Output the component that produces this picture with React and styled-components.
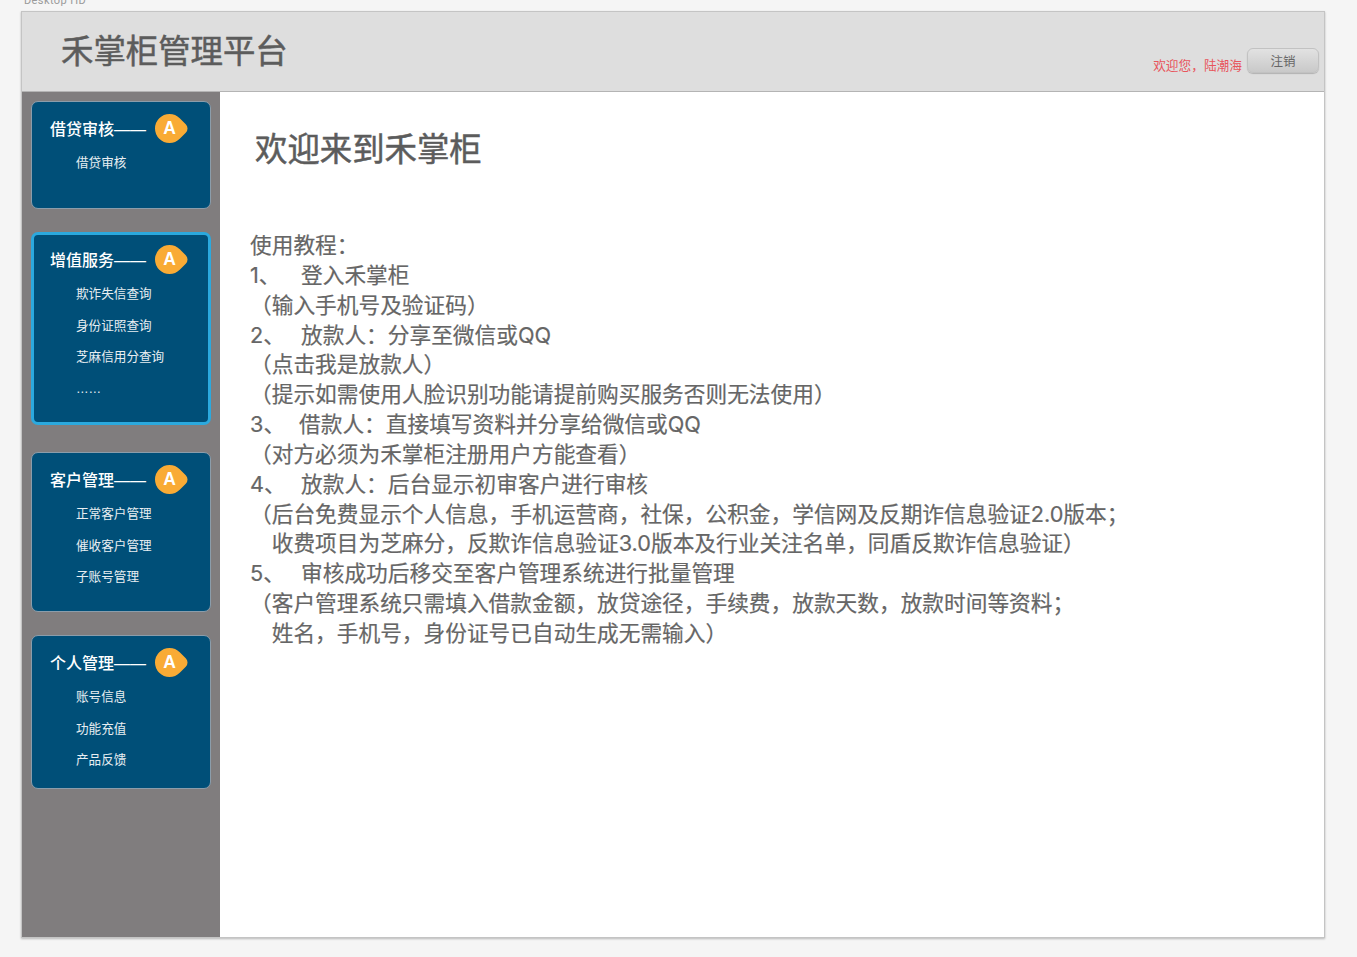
import React from "react";
import styled, { createGlobalStyle } from "styled-components";

const GlobalStyle = createGlobalStyle`
  html, body {
    margin: 0;
    padding: 0;
    background: #f5f5f5;
  }
  body {
    font-family: "Liberation Sans", "Noto Sans CJK SC", sans-serif;
    overflow: hidden;
  }
`;

const menus = [
  { title: "借贷审核", height: 108, after: 23, items: ["借贷审核"] },
  {
    title: "增值服务",
    height: 193,
    after: 27,
    active: true,
    items: ["欺诈失信查询", "身份证照查询", "芝麻信用分查询", "……"],
  },
  {
    title: "客户管理",
    height: 160,
    after: 23,
    items: ["正常客户管理", "催收客户管理", "子账号管理"],
  },
  {
    title: "个人管理",
    height: 154,
    after: 0,
    items: ["账号信息", "功能充值", "产品反馈"],
  },
];

const tutorial = [
  { text: "使用教程：" },
  { num: "1、", gap: 51, text: "登入禾掌柜" },
  { text: "（输入手机号及验证码）" },
  { num: "2、", gap: 51, text: "放款人：分享至微信或QQ" },
  { text: "（点击我是放款人）" },
  { text: "（提示如需使用人脸识别功能请提前购买服务否则无法使用）" },
  { num: "3、", gap: 49, text: "借款人：直接填写资料并分享给微信或QQ" },
  { text: "（对方必须为禾掌柜注册用户方能查看）" },
  { num: "4、", gap: 51, text: "放款人：后台显示初审客户进行审核" },
  { text: "（后台免费显示个人信息，手机运营商，社保，公积金，学信网及反期诈信息验证2.0版本；" },
  { text: "　收费项目为芝麻分，反欺诈信息验证3.0版本及行业关注名单，同盾反欺诈信息验证）" },
  { num: "5、", gap: 51, text: "审核成功后移交至客户管理系统进行批量管理" },
  { text: "（客户管理系统只需填入借款金额，放贷途径，手续费，放款天数，放款时间等资料；" },
  { text: "　姓名，手机号，身份证号已自动生成无需输入）" },
];

const App = () => {
  return (
    <Page lang="zh-CN">
      <GlobalStyle />
      <FrameLabel>Desktop HD</FrameLabel>
      <Frame>
        <Header>
          <Logo>禾掌柜管理平台</Logo>
          <UserArea>
            <Welcome>欢迎您，陆潮海</Welcome>
            <LogoutBtn>注销</LogoutBtn>
          </UserArea>
        </Header>
        <Body>
          <Sidebar>
            {menus.map((menu) => (
              <MenuCard
                key={menu.title}
                $height={menu.height}
                $after={menu.after}
                $active={menu.active}
              >
                <MenuHead>
                  <MenuTitle>{menu.title}——</MenuTitle>
                  <Badge>
                    <BadgeLetter>A</BadgeLetter>
                  </Badge>
                </MenuHead>
                <MenuList>
                  {menu.items.map((item) => (
                    <MenuItem key={item}>{item}</MenuItem>
                  ))}
                </MenuList>
              </MenuCard>
            ))}
          </Sidebar>
          <Content>
            <Heading>欢迎来到禾掌柜</Heading>
            <Tutorial>
              {tutorial.map((line) => (
                <TutorialLine key={line.text}>
                  {line.num && <LineNum $gap={line.gap}>{line.num}</LineNum>}
                  {line.text}
                </TutorialLine>
              ))}
            </Tutorial>
          </Content>
        </Body>
      </Frame>
    </Page>
  );
};

const Page = styled.div`
  width: 1357px;
  height: 957px;
  overflow: hidden;
`;

const FrameLabel = styled.div`
  height: 11px;
  padding-left: 24px;
  font-family: Roboto, sans-serif;
  font-size: 11px;
  line-height: 1px;
  letter-spacing: 0.4px;
  color: #9a9a9a;
  overflow: hidden;
`;

const Frame = styled.div`
  width: 1302px;
  height: 925px;
  margin-left: 21px;
  border: 1px solid #c4c4c4;
  box-shadow: 0 1px 2px rgba(0, 0, 0, 0.25);
  display: flex;
  flex-direction: column;
  background: #fff;
`;

const Header = styled.header`
  height: 79px;
  flex-shrink: 0;
  display: flex;
  justify-content: space-between;
  padding: 0 5px 0 39px;
  background: #dedede;
  border-bottom: 1px solid #b4b4b4;
`;

const Logo = styled.h1`
  margin: 20px 0 0;
  font-size: 32.4px;
  line-height: 40px;
  font-weight: 400;
  -webkit-text-stroke: 0.5px #5c5c5c;
  color: #5c5c5c;
`;

const UserArea = styled.div`
  display: flex;
  align-items: flex-start;
  padding-top: 36px;
`;

const Welcome = styled.span`
  margin: 10px 5px 0 0;
  font-size: 12.7px;
  line-height: 16px;
  color: #e8555c;
`;

const LogoutBtn = styled.button`
  width: 72px;
  height: 25px;
  padding: 0;
  border: 1px solid #c2c2c2;
  border-radius: 6px;
  background: linear-gradient(#e2e2e2, #c9c9c9);
  box-shadow: 0 1px 1px rgba(0, 0, 0, 0.2);
  font-family: inherit;
  font-size: 12.5px;
  color: #666;
`;

const Body = styled.div`
  flex: 1;
  display: flex;
  min-height: 0;
`;

const Sidebar = styled.aside`
  width: 198px;
  flex-shrink: 0;
  box-sizing: border-box;
  padding: 9px 0 0 9px;
  background: #807d7e;
`;

const MenuCard = styled.section`
  box-sizing: border-box;
  width: 180px;
  height: ${(p) => p.$height}px;
  margin-bottom: ${(p) => p.$after}px;
  padding: ${(p) => (p.$active ? "9px 0 0 16px" : "11px 0 0 18px")};
  border: ${(p) => (p.$active ? "3px solid #2ba9de" : "1px solid #8b9dab")};
  border-radius: 7px;
  background: #004f78;
`;

const MenuHead = styled.div`
  display: flex;
  align-items: center;
  height: 30px;
`;

const MenuTitle = styled.span`
  width: 105px;
  white-space: nowrap;
  font-size: 16px;
  font-weight: 500;
  color: #fff;
`;

const Badge = styled.span`
  position: relative;
  width: 29px;
  height: 29px;
  display: flex;
  align-items: center;
  justify-content: center;

  &::before {
    content: "";
    position: absolute;
    inset: 0;
    background: #f9ab35;
    border-radius: 50% 6px 50% 50%;
    transform: rotate(45deg);
  }
`;

const BadgeLetter = styled.span`
  position: relative;
  font-size: 17.5px;
  line-height: 18px;
  font-weight: 700;
  color: #fff;
`;

const MenuList = styled.ul`
  list-style: none;
  margin: 5px 0 0 26px;
  padding: 0;
`;

const MenuItem = styled.li`
  height: 31.6px;
  font-size: 12.6px;
  line-height: 31.6px;
  color: #e8eef2;
`;

const Content = styled.main`
  flex: 1;
  padding: 38px 0 0 30px;
`;

const Heading = styled.h2`
  margin: 0 0 0 5px;
  height: 40px;
  font-size: 32.4px;
  line-height: 40px;
  font-weight: 400;
  -webkit-text-stroke: 0.5px #5c5c5c;
  color: #5c5c5c;
`;

const Tutorial = styled.div`
  margin-top: 61px;
  font-family: Inter, "Noto Sans CJK SC", sans-serif;
`;

const TutorialLine = styled.p`
  margin: 0;
  font-size: 21.7px;
  line-height: 29.85px;
  white-space: pre;
  -webkit-text-stroke: 0.2px #666;
  color: #666;
`;

const LineNum = styled.span`
  display: inline-block;
  width: ${(p) => p.$gap}px;
`;

export default App;
